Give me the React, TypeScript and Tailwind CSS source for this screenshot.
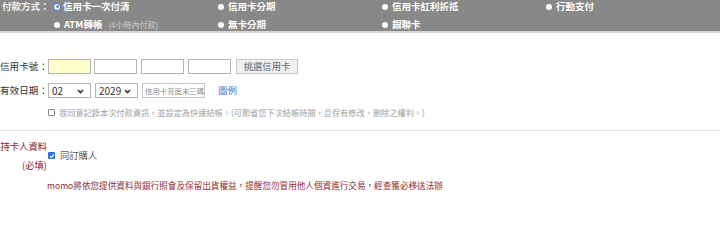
import React from "react";

const FONT = "font-['Noto_Sans_CJK_TC','Noto_Sans',sans-serif]";

function Dot() {
  return <span className="block w-[6px] h-[6px] rounded-full bg-white shrink-0" />;
}

function Opt({ children, selected }: { children: React.ReactNode; selected?: boolean }) {
  return (
    <div className="flex items-center h-[13px] whitespace-nowrap">
      {selected ? (
        <span className="ml-[0px] mr-[2px] flex items-center justify-center w-[8px] h-[8px] rounded-full border-[1.5px] border-[#2f74e0] bg-white shrink-0">
          <span className="block w-[3px] h-[3px] rounded-full bg-[#8a8a8a]" />
        </span>
      ) : (
        <span className="ml-[1px] mr-[4px] flex items-center">
          <Dot />
        </span>
      )}
      {children}
    </div>
  );
}

function Chevron() {
  return (
    <svg width="7" height="5" viewBox="0 0 7 5" className="absolute right-[6px] top-[5px] pointer-events-none">
      <path d="M1 1 L3.5 3.6 L6 1" fill="none" stroke="#333" strokeWidth="1.6" />
    </svg>
  );
}

function FakeSelect({ value, w }: { value: string; w: string }) {
  return (
    <div className={`relative h-[15px] border border-[#b5b5b5] bg-white ${w} flex items-center pl-[3px] text-[10px] text-[#333] leading-none`}>
      {value}
      <Chevron />
    </div>
  );
}

export default function App() {
  return (
    <div className={`w-[720px] h-[203px] bg-white overflow-hidden ${FONT}`}>
      {/* header */}
      <div className="h-[31px] bg-[#888888] grid grid-cols-[53px_164px_164px_164px_175px] gap-y-[5px] text-[9.5px] text-white font-bold leading-none pt-0">
        <div className="h-[13px] flex items-center pl-[2px] whitespace-nowrap text-[#f2f2f2]">付款方式：</div>
        <Opt selected>信用卡一次付清</Opt>
        <Opt>信用卡分期</Opt>
        <Opt>信用卡紅利折抵</Opt>
        <Opt>行動支付</Opt>
        <div />
        <Opt>
          ATM轉帳<span className="ml-[6px] text-[8px] font-normal text-[#d0d0d0]">(4小時內付款)</span>
        </Opt>
        <Opt>無卡分期</Opt>
        <Opt>銀聯卡</Opt>
      </div>
      <div className="h-[2px] bg-[#d6d6d6]" />

      {/* card number */}
      <div className="mt-[26px] flex items-center h-[15px]">
        <div className="w-[48px] flex justify-end whitespace-nowrap text-[9.6px] text-[#333] leading-none">信用卡號：</div>
        <div className="w-[43px] h-[15px] border border-[#b5b5b5] bg-[#ffffcc]" />
        <div className="ml-[3px] w-[43px] h-[15px] border border-[#b5b5b5] bg-white" />
        <div className="ml-[4px] w-[43px] h-[15px] border border-[#b5b5b5] bg-white" />
        <div className="ml-[4px] w-[43px] h-[15px] border border-[#b5b5b5] bg-white" />
        <div className="ml-[5px] w-[62px] h-[15px] border border-[#c8c8c8] bg-[#efefef] flex items-center justify-center text-[9.3px] text-[#666] leading-none">
          挑選信用卡
        </div>
      </div>

      {/* expiry */}
      <div className="mt-[9px] flex items-center h-[15px]">
        <div className="w-[48px] flex justify-end whitespace-nowrap text-[9.6px] text-[#333] leading-none">有效日期：</div>
        <FakeSelect value="02" w="w-[43px]" />
        <div className="ml-[4px]">
          <FakeSelect value="2029" w="w-[43px]" />
        </div>
        <div className="ml-[4px] w-[63px] h-[15px] border border-[#c8c8c8] bg-white flex items-center pl-[2px] text-[7.4px] text-[#8c8c8c] leading-none whitespace-nowrap">
          信用卡背面末三碼
        </div>
        <div className="ml-[13px] text-[9.5px] text-[#3b7dd8] leading-none">圖例</div>
      </div>

      {/* agree */}
      <div className="mt-[8px] flex items-center h-[12px] pl-[48px]">
        <span className="block w-[7px] h-[7px] border border-[#888] bg-white rounded-[1px] shrink-0" />
        <span className="ml-[4px] text-[8.2px] text-[#a0a0a0] leading-none whitespace-nowrap">
          我同意記錄本次付款資訊，並設定為快速結帳。(可節省您下次結帳時間，且保有修改、刪除之權利。)
        </span>
      </div>

      <div className="mt-[12px] h-px bg-[#e2e2e2]" />

      {/* cardholder */}
      <div className="mt-[6px] flex items-center">
        <div className="w-[47px] flex flex-col items-end text-[9.3px] text-[#8b2028] leading-[19px] whitespace-nowrap">
          <div className="flex justify-end w-full">持卡人資料</div>
          <div>(必填)</div>
        </div>
        <div className="ml-[1px] flex items-center">
          <span className="flex items-center justify-center w-[7px] h-[7px] bg-[#2b72e6] rounded-[1px] shrink-0">
            <svg width="6" height="6" viewBox="0 0 6 6">
              <path d="M1 3.1 L2.5 4.5 L5 1.5" fill="none" stroke="#fff" strokeWidth="1.2" />
            </svg>
          </span>
          <span className="ml-[5px] text-[9.3px] text-[#555] leading-none">同訂購人</span>
        </div>
      </div>
      <div className="mt-[4px] pl-[47px] h-[12px] flex items-center text-[8.6px] text-[#8e2c32] leading-none whitespace-nowrap">
        momo將依您提供資料與銀行照會及保留出貨權益，提醒您勿冒用他人個資進行交易，經查獲必移送法辦
      </div>
    </div>
  );
}
